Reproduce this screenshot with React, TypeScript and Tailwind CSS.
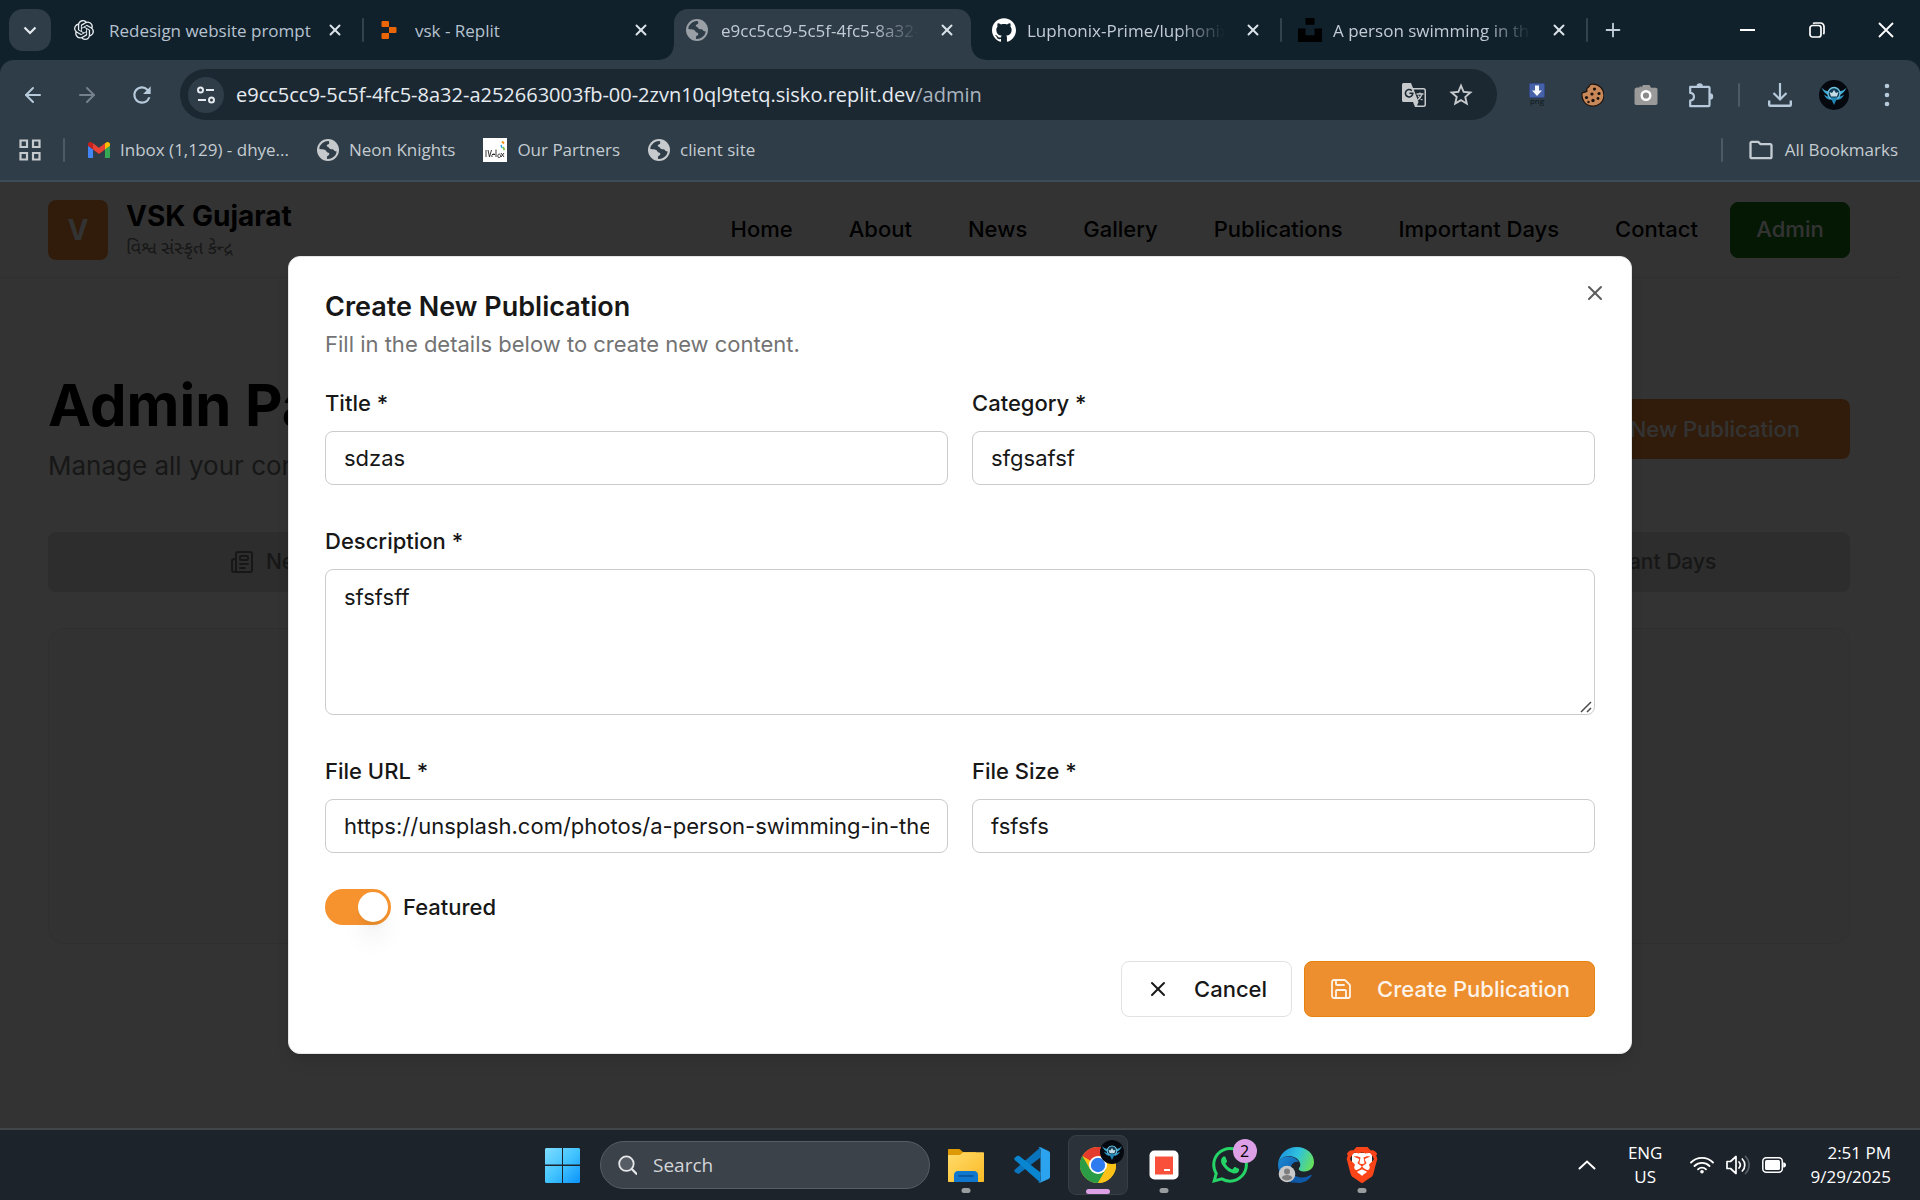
import { useState } from "react";
import type { ReactNode } from "react";
import { ArrowLeft, ArrowRight, Newspaper, Plus, Save, X, BookOpen, Calendar, Image as ImageIcon } from "lucide-react";
import { SiBrave, SiGithub, SiOpenai, SiReplit, SiWhatsapp } from "react-icons/si";
import { MdOutlineStarBorder, MdRefresh, MdOutlineFolder } from "react-icons/md";

/* ---------- small drawings ---------- */

function Globe({ className }: { className: string }) {
  return (
    <svg viewBox="0 0 24 24" className={className} aria-hidden="true">
      <circle cx="12" cy="12" r="12" fill="currentColor" />
      <path
        d="M12.8 2.3A9.8 9.8 0 0 0 2.4 10.6c2.4 1 4.600 .4 6.600 1.400 1.500.8 1.200 2.300 2.600 2.800 1.300.4 2.200.6 1.700 2-.4 1.200-1.900 1-2.300 2.200-.3.9-.2 1.700.1 2.700A9.800 9.800 0 0 0 21.600 13.600c-1.600.2-2.400-.2-3.200-1.500-.8-1.300-2.500-.8-3.900-1.300-1.500-.5-1.300-2.100-2.900-2.400-1.300-.2-1.400-2 .1-2.400 1.200-.3 1.900-.8 1.600-2.100z"
        className="fill-[#2e3d47]"
      />
    </svg>
  );
}

function UnsplashMark() {
  return (
    <svg viewBox="0 0 24 24" className="size-6" aria-hidden="true">
      <path d="M7.500 0h9v6.700h-9zM0 10.600h7.500v6.700h9v-6.700H24V24H0z" fill="#000" />
    </svg>
  );
}

function GmailMark() {
  return (
    <svg viewBox="0 0 24 18" className="w-[22px]" aria-hidden="true">
      <path d="M0 4v12.400C0 17.300.7 18 1.600 18h3.900V7.800z" fill="#4285f4" />
      <path d="M24 4v12.400c0 .9-.7 1.600-1.600 1.600h-3.900V7.800z" fill="#34a853" />
      <path d="M18.500 1.400v6.900L24 4.200V2.500c0-2.100-2.400-3.200-4-2z" fill="#fbbc04" />
      <path d="M5.500 8.300V1.400L12 6.200l6.500-4.800v6.900L12 13.200z" fill="#ea4335" />
      <path d="M0 2.500v1.700l5.500 4.100V1.400L4 .5C2.300-.8 0 .4 0 2.500z" fill="#c5221f" />
    </svg>
  );
}

function VeloxMark() {
  return (
    <svg viewBox="0 0 24 24" className="size-6" aria-hidden="true">
      <path d="M0 0h24v24H0z" fill="#fff" />
      <path d="M3 12v7M5 12l1.500 7L8.500 12M9 16.500h3M9 19c-1-3 2.500-4 3-2M13 11.500V19M15 19c-1-3 2-4 2.500-1.500S15 20 15 19M18 15l3 4M21 15l-3 4" fill="none" stroke="#222" strokeWidth=".9" />
      <path d="M19 3.500l2 2" stroke="#f29111" strokeWidth="1.800" />
      <path d="M18 7l1 3" stroke="#2fa4e7" strokeWidth="1.500" />
      <path d="M20 9l1.500 3" stroke="#7ac143" strokeWidth="1.800" />
    </svg>
  );
}

function SiteInfoIcon() {
  return (
    <svg viewBox="0 0 20 20" className="size-5" fill="none" stroke="#e3e9ee" strokeWidth="2" aria-hidden="true">
      <circle cx="4.500" cy="5" r="2.500" />
      <path d="M10 5h8M2 15h8" />
      <circle cx="15.500" cy="15" r="2.500" />
    </svg>
  );
}

function TranslateIcon() {
  return (
    <svg viewBox="0 0 26 26" className="size-[26px]" aria-hidden="true">
      <path d="M2.500 1H10l2 5h10.500A2.500 2.500 0 0 1 25 8.500v14a2.500 2.500 0 0 1-2.500 2.500H14l-2-5H2.500A1.500 1.500 0 0 1 1 18.500v-16A1.500 1.500 0 0 1 2.500 1z" fill="#c7cacd" />
      <path d="M12.700 7.500h9.800a1 1 0 0 1 1 1v14a1 1 0 0 1-1 1h-6.500l1.500-3.500z" fill="#1b2832" />
      <path d="M15.500 12h7M19 10.500V12M21 12c-.6 2.500-2.500 4.600-4.500 6M17 13.500c1 1.800 2.500 3.500 4.500 4.500" fill="none" stroke="#c7cacd" strokeWidth="1.300" />
      <path d="M10.800 8.700a3.700 3.700 0 1 0 1 2.500H8.400" fill="none" stroke="#1b2832" strokeWidth="1.600" />
    </svg>
  );
}

function PngIcon() {
  return (
    <svg viewBox="0 0 16 24" className="h-6 w-4" aria-hidden="true">
      <rect x=".5" y=".5" width="15" height="14" rx="1" fill="#4661a8" stroke="#34498a" />
      <path d="M6 2.500h4v5h3l-5 5.500-5-5.500h3z" fill="#f4f6fb" />
      <text x="8" y="21" textAnchor="middle" fontSize="8" className="fill-[#10181e] font-['Open_Sans',sans-serif]">png</text>
    </svg>
  );
}

function CookieIcon() {
  return (
    <svg viewBox="0 0 24 24" className="size-6" aria-hidden="true">
      <path d="M12.500 1.200C9 .6 10 3.500 8.300 4.200 7 4.700 6.500 6.500 7 8c-1.400 1.600-3 1.200-4.800 1.800A11 11 0 1 0 12.500 1.200z" fill="#c98859" stroke="#1c120c" strokeWidth="1.200" />
      <g fill="#1c120c">
        <circle cx="14.500" cy="6" r="1.600" />
        <circle cx="12" cy="11" r="1.600" />
        <circle cx="19" cy="10.500" r="1.600" />
        <circle cx="6.500" cy="14.500" r="1.600" />
        <circle cx="13" cy="17.500" r="1.700" />
        <circle cx="18" cy="15.500" r="1.400" />
        <circle cx="8.500" cy="19" r="1.200" />
      </g>
    </svg>
  );
}

function CameraIcon() {
  return (
    <svg viewBox="0 0 24 24" className="size-6" aria-hidden="true">
      <path d="M2.500 4.500h3l0-1h2v1L9 2h6.500l1.500 2.800h5A1.500 1.500 0 0 1 23.500 6.300v14A1.700 1.700 0 0 1 21.800 22H2.200A1.700 1.700 0 0 1 .5 20.300v-13A2.500 2.500 0 0 1 2.500 4.500z" fill="#9a9a9a" />
      <circle cx="12" cy="12.500" r="4.300" fill="#8a8a8a" stroke="#fff" strokeWidth="2.400" />
    </svg>
  );
}

function PuzzleIcon() {
  return (
    <svg viewBox="0 0 26 26" className="size-[26px]" aria-hidden="true">
      <path
        d="M2.200 4.800h18.300a1 1 0 0 1 1 1v17.400a1 1 0 0 1-1 1H2.200v-5.700c5-.4 5-7.200 0-7.600z"
        fill="none"
        stroke="currentColor"
        strokeWidth="2.200"
        strokeLinejoin="round"
      />
      <path d="M8.500 4.500a3.200 3.200 0 0 1 6.400 0zM22 11.200a3.200 3.200 0 0 1 0 6.400z" fill="currentColor" />
    </svg>
  );
}

function DownloadIcon() {
  return (
    <svg viewBox="0 0 24 24" className="size-6" fill="none" stroke="currentColor" strokeWidth="2.400" aria-hidden="true">
      <path d="M12 0v16M5.500 10l6.500 6.500 6.500-6.500" strokeWidth="2.200" />
      <path d="M1.200 17.500v4.300c0 .6.400 1 1 1h19.600c.6 0 1-.4 1-1v-4.300" />
    </svg>
  );
}

function WingedAvatar({ className }: { className: string }) {
  return (
    <svg viewBox="0 0 30 30" className={className} aria-hidden="true">
      <circle cx="15" cy="15" r="15" fill="#05090f" />
      <path d="M2.500 7.500c3 3.500 6 3.500 8.500 4.500L10 15c-3-.5-6-3.500-7.500-7.500zM27.500 7.500c-3 3.500-6 3.500-8.500 4.500l1 3c3-.5 6-3.500 7.500-7.500z" fill="#3fa9d0" />
      <path d="M5 14.500c2 1.500 4 2 5.500 2.500l1.500 3c-3-.5-6-2-7-5.500zM25 14.500c-2 1.500-4 2-5.500 2.500L18 20c3-.5 6-2 7-5.500z" fill="#2a94c4" />
      <circle cx="15" cy="13.500" r="6" fill="#123c55" stroke="#6ec3e0" strokeWidth="1.300" />
      <path d="M10.500 12l2.500 1 2-3 2 3 2.500-1-1.500 4.500h-6z" fill="#c4dce6" />
      <path d="M11.500 17.500h7L15 25z" fill="#1f86b4" />
    </svg>
  );
}

function ChromeMark() {
  return (
    <svg viewBox="0 0 36 36" className="size-9" aria-hidden="true">
      <circle cx="18" cy="18" r="18" fill="#fbc116" />
      <path d="M18 18L2.400 9A18 18 0 0 1 33.600 9z" fill="#e33b2e" />
      <path d="M2.400 9A18 18 0 0 0 18 36l7.800-13.500L18 18l-7.800 4.500z" fill="#2a9c46" />
      <path d="M18 9h15.600A18 18 0 0 1 18 36l7.800-13.500z" fill="#fbc116" />
      <circle cx="18" cy="18" r="9" fill="#fff" />
      <circle cx="18" cy="18" r="7.200" fill="#2f7cf0" />
    </svg>
  );
}

function CodeMark() {
  return (
    <svg viewBox="0 0 36 36" className="size-9" aria-hidden="true">
      <path d="M26.500 10.500L4.500 27 1 25.200c-1-.9-1-1.900 0-2.800L26 .8z" fill="#0a74bd" />
      <path d="M1 13.200c-1-.9-1-1.900 0-2.700L3 9c.7-.5 1.600-.5 2.300 0L26.500 25.500 26 35.200z" fill="#0a86d1" />
      <path d="M26 35.800c-1 0-1.600-.5-2.300-1.200 1 .9 2.800.2 2.800-1.200V2.600c0-1.400-1.800-2.100-2.800-1.200C24.500.6 25.500-.3 27 .4l7.500 3.600c1 .5 1.500 1.200 1.500 2.200v23.600c0 1-.5 1.700-1.500 2.200z" fill="#2ba3ee" />
    </svg>
  );
}

function EdgeMark() {
  return (
    <svg viewBox="0 0 36 36" className="size-9" aria-hidden="true">
      <defs>
        <linearGradient id="edge-top" x1="0" y1=".3" x2="1" y2=".6">
          <stop offset="0" stopColor="#1c8fdc" />
          <stop offset=".5" stopColor="#2fc2df" />
          <stop offset="1" stopColor="#66e05a" />
        </linearGradient>
        <linearGradient id="edge-low" x1="0" y1="0" x2="1" y2="1">
          <stop offset="0" stopColor="#1b8ad8" />
          <stop offset="1" stopColor="#0c4a93" />
        </linearGradient>
      </defs>
      <path d="M0 17C1 7 9 0 18.500 0 29 0 36 7 36 15c0 6-4.500 9.500-9.500 9.500-4 0-6.500-1.500-5.500-3.500 1.500-2 1.500-3 1-5C20.500 11 15 9 11 9 6 9 1.500 12 0 17z" fill="url(#edge-top)" />
      <path d="M0 17c1.500-5 5.500-7.500 10.500-7.500 4 0 8.500 2 10.500 5.500-5-1-8 2-8 6.500 0 6.500 5 11.500 11 13.500C10 38.500 0 30 0 17z" fill="url(#edge-low)" />
      <path d="M13.500 19c-2 6 3 11.500 10.500 11.500 3.500 0 6-1.500 9-2.500.7-.2.900.4.500 1C30 34 25 36 20.500 36 13 34 10.500 25 13.500 19z" fill="#0f5aa8" />
      <circle cx="9" cy="27" r="8.300" fill="#c9c9c9" />
      <circle cx="9" cy="24.500" r="3" fill="#7e7e7e" />
      <path d="M3.800 31c0-4 10.400-4 10.400 0-2.500 3.200-7.900 3.200-10.400 0z" fill="#7e7e7e" />
    </svg>
  );
}

function FolderMark() {
  return (
    <svg viewBox="0 0 36 33" className="w-9" aria-hidden="true">
      <defs>
        <linearGradient id="folder-front" x1="0" y1="0" x2="1" y2="1">
          <stop offset="0" stopColor="#ffdc6b" />
          <stop offset="1" stopColor="#fbb924" />
        </linearGradient>
      </defs>
      <path d="M1 0h9.500c1 0 1.500.3 2.200 1L15 3H28v6H0V1c0-.6.4-1 1-1z" fill="#dd9a06" />
      <path d="M0 6h11c1 0 1.500-.3 2.200-1l1-1c.6-.6 1-.8 2-.8H35c.6 0 1 .4 1 1V32c0 .6-.4 1-1 1H1c-.6 0-1-.4-1-1z" fill="url(#folder-front)" />
      <path d="M6 33v-7c0-2.200 1.500-4 4-4h16c2.500 0 4 1.800 4 4v7z" fill="#0f78ce" />
      <path d="M11 27h14" stroke="#0b4f94" strokeWidth="1.600" strokeLinecap="round" />
    </svg>
  );
}

function WindowsMark() {
  return (
    <svg viewBox="0 0 35 35" className="size-[35px]" aria-hidden="true">
      <defs>
        <linearGradient id="win-pane" gradientUnits="userSpaceOnUse" x1="0" y1="0" x2="35" y2="35">
          <stop offset="0" stopColor="#7fdcff" />
          <stop offset=".5" stopColor="#43c4ff" />
          <stop offset="1" stopColor="#0a93fb" />
        </linearGradient>
      </defs>
      <path d="M1 0h16v16.500H0V1zM18 0h16l1 1v15.500H18zM0 18h17v17H1l-1-1zM18 18h17v16l-1 1H18z" fill="url(#win-pane)" />
    </svg>
  );
}

function RedAppMark() {
  return (
    <svg viewBox="0 0 30 30" className="size-[30px]" aria-hidden="true">
      <rect x=".5" y=".5" width="29" height="29" rx="5" fill="#fff" />
      <rect x="6" y="6.500" width="18" height="18" fill="#f9503c" />
      <path d="M15 20h6" stroke="#fff" strokeWidth="2" />
    </svg>
  );
}

function WifiIcon() {
  return (
    <svg viewBox="0 0 24 18" className="w-6" fill="none" stroke="#fff" strokeWidth="1.800" strokeLinecap="round" aria-hidden="true">
      <path d="M1 6.500a15.500 15.500 0 0 1 22 0M4.500 10a10.700 10.700 0 0 1 15 0M8 13.300a5.700 5.700 0 0 1 8 0" />
      <circle cx="12" cy="15.700" r="1.800" fill="#fff" stroke="none" />
    </svg>
  );
}

function VolumeIcon() {
  return (
    <svg viewBox="0 0 24 20" className="w-6" fill="none" stroke="#fff" strokeWidth="1.700" strokeLinecap="round" strokeLinejoin="round" aria-hidden="true">
      <path d="M1 6.500h3.500L10 1.500v17l-5.500-5H1z" />
      <path d="M13 7a4.500 4.500 0 0 1 0 6M16.300 4a8.500 8.500 0 0 1 0 12" />
      <path d="M19.500 1.500a12 12 0 0 1 0 17" stroke="#5a6067" />
    </svg>
  );
}

function BatteryIcon() {
  return (
    <svg viewBox="0 0 24 16" className="w-6" aria-hidden="true">
      <rect x=".8" y=".8" width="19.500" height="14.400" rx="3.500" fill="none" stroke="#fff" strokeWidth="1.500" />
      <rect x="3" y="3" width="15" height="10" rx="1.500" fill="#fff" />
      <path d="M21.200 5.500h.8c1 0 2 1 2 2.500s-1 2.500-2 2.500h-.8z" fill="#fff" />
    </svg>
  );
}

/* ---------- browser chrome ---------- */

type Tab = { title: string; icon: ReactNode; active?: boolean; fade?: boolean; divider?: boolean };

const tabs: Tab[] = [
  { title: "Redesign website prompt", icon: <SiOpenai className="size-5 text-[#e8eef2]" />, divider: true },
  { title: "vsk - Replit", icon: <SiReplit className="size-[18px] text-[#ec6608]" /> },
  { title: "e9cc5cc9-5c5f-4fc5-8a32-a252663003fb", icon: <Globe className="size-[22px] text-[#9aa0a6]" />, active: true, fade: true },
  { title: "Luphonix-Prime/luphonix-website", icon: <SiGithub className="size-6 text-white" />, fade: true, divider: true },
  { title: "A person swimming in the ocean", icon: <UnsplashMark />, fade: true, divider: true },
];

function TabStrip() {
  return (
    <div className="flex h-[60px] items-start bg-[#11212b] pt-[9px] pl-[9px]">
      <button aria-label="Search tabs" className="flex h-[42px] w-[42px] shrink-0 items-center justify-center rounded-[14px] bg-[#2e3d47]">
        <svg viewBox="0 0 14 14" className="size-[14px]" fill="none" stroke="#e3e9ee" strokeWidth="2.200" aria-hidden="true">
          <path d="M1.500 4.500L7 10l5.500-5.500" />
        </svg>
      </button>
      <div role="tablist" className="ml-[11px] flex min-w-0 max-w-[1530px] flex-1">
        {tabs.map((tab) => (
          <div key={tab.title} className="flex h-[51px] min-w-0 flex-1 pr-px">
            <div
              role="tab"
              aria-selected={!!tab.active}
              className={
                tab.active
                  ? "relative flex min-w-0 flex-1 rounded-t-[14px] bg-[#2e3d47] pl-3"
                  : "flex min-w-0 flex-1 pl-3"
              }
            >
              {tab.active && (
                <>
                  <span className="absolute bottom-0 -left-[14px] size-[14px] bg-[radial-gradient(circle_at_0_0,transparent_13px,#2e3d47_14px)]" />
                  <span className="absolute -right-[14px] bottom-0 size-[14px] bg-[radial-gradient(circle_at_100%_0,transparent_13px,#2e3d47_14px)]" />
                </>
              )}
              <span className="flex h-[42px] w-6 shrink-0 items-center">{tab.icon}</span>
              <span
                className={
                  tab.fade
                    ? "ml-[11px] h-[42px] min-w-0 flex-1 overflow-hidden text-[17px] leading-[44px] whitespace-nowrap text-[#c3ccd6] [mask-image:linear-gradient(to_right,#000_74%,transparent_97%)]"
                    : "ml-[11px] h-[42px] min-w-0 flex-1 overflow-hidden text-[17px] leading-[44px] whitespace-nowrap text-[#b6c2d0]"
                }
              >
                {tab.title}
              </span>
              <button aria-label={"Close " + tab.title} className="mr-[6px] ml-1 flex h-[42px] w-9 shrink-0 items-center justify-center text-[#dbe3ea]">
                <X className="size-[18px]" strokeWidth={2.600} />
              </button>
            </div>
            <span className="flex h-[42px] w-2 shrink-0 items-center justify-center">
              {tab.divider && <span className="h-6 w-0.5 rounded-full bg-[#33434e]" />}
            </span>
          </div>
        ))}
      </div>
      <button aria-label="New tab" className="flex h-[42px] w-[42px] shrink-0 items-center justify-center text-[#c3d0dc]">
        <Plus className="size-[22px]" strokeWidth={2} />
      </button>
      <div className="ml-auto flex h-[42px] shrink-0 text-white">
        <button aria-label="Minimize" className="flex w-[69px] items-center justify-center">
          <span className="h-0.5 w-[15px] bg-white" />
        </button>
        <button aria-label="Restore" className="flex w-[69px] items-center justify-center">
          <svg viewBox="0 0 16 16" className="size-4" fill="none" stroke="currentColor" strokeWidth="1.700" aria-hidden="true">
            <rect x="1" y="3.500" width="11" height="11.500" rx="2.500" />
            <path d="M4 1.500C4.600 1 5.300 1 6 1h5.500A3.500 3.500 0 0 1 15 4.500v6c0 .7-.2 1.300-.6 1.800" />
          </svg>
        </button>
        <button aria-label="Close window" className="flex w-[69px] items-center justify-center">
          <svg viewBox="0 0 16 16" className="size-4" fill="none" stroke="currentColor" strokeWidth="1.800" aria-hidden="true">
            <path d="M1 1l14 14M15 1L1 15" />
          </svg>
        </button>
      </div>
    </div>
  );
}

function AddressBar() {
  return (
    <div className="flex h-[60px] items-center rounded-t-[14px] bg-[#2e3d47] pr-[25px] pt-[9px]">
      <div className="flex w-[180px] shrink-0 items-center pl-[21px] text-[#b7cadb]">
        <button aria-label="Back" className="flex w-[54px]"><ArrowLeft className="size-6" strokeWidth={2} /></button>
        <button aria-label="Forward" className="flex w-[54px] text-[#75828c]"><ArrowRight className="size-6" strokeWidth={2} /></button>
        <button aria-label="Reload" className="flex"><MdRefresh className="size-[26px]" /></button>
      </div>
      <div className="flex h-[51px] min-w-0 flex-1 items-center rounded-full bg-[#1b2832] pr-[22px] pl-2">
        <button aria-label="View site information" className="flex size-9 shrink-0 items-center justify-center rounded-full bg-[#2e3d47]">
          <SiteInfoIcon />
        </button>
        <div className="ml-3 min-w-0 flex-1 truncate text-[20px] text-[#e6ebf0]">
          e9cc5cc9-5c5f-4fc5-8a32-a252663003fb-00-2zvn10ql9tetq.sisko.replit.dev<span className="text-[#aab4bd]">/admin</span>
        </div>
        <button aria-label="Translate this page"><TranslateIcon /></button>
        <button aria-label="Bookmark this tab" className="ml-5 text-[#c7cacd]"><MdOutlineStarBorder className="size-7" /></button>
      </div>
      <div className="ml-8 flex shrink-0 items-center text-[#b7cadb]">
        <button aria-label="PNG export" className="flex w-[51px]"><PngIcon /></button>
        <button aria-label="Cookies" className="flex w-[54px]"><CookieIcon /></button>
        <button aria-label="Screenshot" className="flex w-[54px]"><CameraIcon /></button>
        <button aria-label="Extensions" className="flex w-[50px]"><PuzzleIcon /></button>
        <span className="h-6 w-0.5 rounded-full bg-[#4a5b67]" />
        <button aria-label="Downloads" className="ml-7 flex w-[51px]"><DownloadIcon /></button>
        <button aria-label="Profile"><WingedAvatar className="size-[30px]" /></button>
        <button aria-label="More" className="ml-[30px] flex w-4 justify-center">
          <svg viewBox="0 0 6 26" className="h-[26px]" fill="currentColor" aria-hidden="true">
            <circle cx="3" cy="4" r="2.300" /><circle cx="3" cy="13" r="2.300" /><circle cx="3" cy="22" r="2.300" />
          </svg>
        </button>
      </div>
    </div>
  );
}

const bookmarks = [
  { label: "Inbox (1,129) - dhye...", icon: <GmailMark /> },
  { label: "Neon Knights", icon: <Globe className="size-[22px] text-[#c7cacd]" /> },
  { label: "Our Partners", icon: <VeloxMark /> },
  { label: "client site", icon: <Globe className="size-[22px] text-[#c7cacd]" /> },
];

function BookmarksBar() {
  return (
    <div className="flex h-[62px] items-center border-b-2 border-[#3d4c56] bg-[#2e3d47] pr-[22px] pl-[19px] text-[17px] text-[#c4cbd1]">
      <button aria-label="Apps" className="flex">
        <svg viewBox="0 0 22 22" className="size-[22px]" fill="none" stroke="#c7cacd" strokeWidth="2.200" aria-hidden="true">
          <path d="M1.500 1.500h6.500v6.500H1.500zM14 1.500h6.500v6.500H14zM1.500 14h6.500v6.500H1.500zM14 14h6.500v6.500H14z" />
        </svg>
      </button>
      <span className="ml-[22px] h-6 w-0.5 rounded-full bg-[#4a5b67]" />
      <nav aria-label="Bookmarks" className="ml-[23px] flex items-center gap-7">
        {bookmarks.map((b) => (
          <a key={b.label} href="#" className="flex items-center gap-[10px] whitespace-nowrap">
            {b.icon}
            {b.label}
          </a>
        ))}
      </nav>
      <span className="ml-auto h-6 w-0.5 rounded-full bg-[#4a5b67]" />
      <button className="ml-6 flex items-center gap-[10px]">
        <MdOutlineFolder className="size-7" />
        All Bookmarks
      </button>
    </div>
  );
}

/* ---------- page under the dialog ---------- */

const links = ["Home", "About", "News", "Gallery", "Publications", "Important Days", "Contact"];

function SitePage() {
  return (
    <div className="absolute inset-0 overflow-hidden bg-white text-black" aria-hidden="true">
      <div className="mr-5">
        <header className="flex h-24 items-center justify-between border-b border-[#ebebeb] pr-[50px] pl-12">
          <div className="flex items-center">
            <div className="flex size-[60px] items-center justify-center rounded-lg bg-[#f28c37] text-[28px] font-bold text-white">V</div>
            <div className="ml-[18px]">
              <div className="pt-1 text-[28px] leading-8 font-bold">VSK Gujarat</div>
              <div className="pt-1 font-['Noto_Sans_Gujarati','Noto_Sans',sans-serif] text-[18px] leading-7 text-[#737373]">વિશ્વ સંસ્કૃત કેન્દ્ર</div>
            </div>
          </div>
          <nav className="flex items-center text-[22px] font-medium">
            <div className="flex gap-14">
              {links.map((l) => (
                <a key={l} href="#">{l}</a>
              ))}
            </div>
            <button className="ml-8 h-14 w-[120px] rounded-lg border border-[#147814] bg-[#147814] text-white">Admin</button>
          </nav>
        </header>
        <main className="pt-[92px] pr-[50px] pl-12">
          <div className="flex items-center justify-between">
            <div>
              <h1 className="text-[58px] leading-[70px] font-bold">Admin Panel</h1>
              <p className="mt-2 text-[26px] leading-9 text-[#737373]">Manage all your content from here</p>
            </div>
            <button className="mt-1 flex h-[60px] items-center gap-4 rounded-lg bg-[#f28c37] px-[50px] text-[22px] font-medium text-white">
              <Plus className="size-5" />
              Add New Publication
            </button>
          </div>
          <div className="mt-12 grid h-[60px] grid-cols-4 rounded-lg bg-[#dedede] px-1 text-[21px] font-medium text-[#737373]">
            <button className="flex items-center justify-center gap-3"><Newspaper className="size-6" />News</button>
            <button className="flex items-center justify-center gap-3"><ImageIcon className="size-6" />Gallery</button>
            <button className="flex items-center justify-center gap-3"><BookOpen className="size-6" />Publications</button>
            <button className="flex items-center justify-center gap-3"><Calendar className="size-6" />Important Days</button>
          </div>
          <div className="mt-9 h-[316px] rounded-2xl border border-[#ebebeb] bg-[#fafafa]" />
        </main>
      </div>
    </div>
  );
}

/* ---------- dialog ---------- */

function Field({ id, label, value }: { id: string; label: string; value: string }) {
  const [text, setText] = useState(value);
  return (
    <div className="flex min-w-0 flex-col gap-3">
      <label htmlFor={id} className="text-[22px] leading-8 font-medium">{label}</label>
      <input
        id={id}
        value={text}
        onChange={(e) => setText(e.target.value)}
        className="h-[54px] w-full rounded-lg border border-[#cbcbcb] px-[18px] text-[22px] outline-none"
      />
    </div>
  );
}

function PublicationDialog() {
  const [featured, setFeatured] = useState(true);
  return (
    <div className="absolute inset-0 flex items-center justify-center bg-black/80">
      <div
        role="dialog"
        aria-modal="true"
        aria-labelledby="dialog-title"
        className="relative w-[70%] rounded-xl border border-[#e5e5e5] bg-white p-9 text-[#171717] shadow-lg"
      >
        <button aria-label="Close" className="absolute top-6 right-6 flex size-6 items-center justify-center text-[#5c5c5c]">
          <X className="size-6" strokeWidth={2} />
        </button>
        <h2 id="dialog-title" className="mt-[-2px] text-[27px] leading-8 font-semibold">Create New Publication</h2>
        <p className="mt-[5px] text-[22px] leading-8 text-[#737373]">Fill in the details below to create new content.</p>
        <form className="mt-[27px]" onSubmit={(e) => e.preventDefault()}>
          <div className="grid grid-cols-2 gap-6">
            <Field id="title" label="Title *" value="sdzas" />
            <Field id="category" label="Category *" value="sfgsafsf" />
          </div>
          <div className="mt-10 flex flex-col gap-3">
            <label htmlFor="description" className="text-[22px] leading-8 font-medium">Description *</label>
            <div className="relative">
              <textarea
                id="description"
                defaultValue="sfsfsff"
                className="block h-[146px] w-full rounded-lg border border-[#cbcbcb] px-[18px] py-3 text-[22px] leading-[30px] outline-none [&::-webkit-resizer]:bg-transparent"
              />
              <svg viewBox="0 0 12 12" className="pointer-events-none absolute right-[3px] bottom-[2px] size-3" stroke="#4a4a4a" strokeWidth="1.500" aria-hidden="true">
                <path d="M1 11L11 1M7 11l4-4" />
              </svg>
            </div>
          </div>
          <div className="mt-10 grid grid-cols-2 gap-6">
            <Field id="file-url" label="File URL *" value="https://unsplash.com/photos/a-person-swimming-in-the-ocean" />
            <Field id="file-size" label="File Size *" value="fsfsfs" />
          </div>
          <div className="mt-9 flex items-center gap-3">
            <input
              id="featured"
              type="checkbox"
              role="switch"
              checked={featured}
              onChange={(e) => setFeatured(e.target.checked)}
              className="h-9 w-[66px] shrink-0 appearance-none rounded-full bg-[#d4d4d4] p-[3px] before:block before:size-[30px] before:rounded-full before:bg-white before:shadow-xl checked:bg-[#f6932f] checked:before:ml-[30px]"
            />
            <label htmlFor="featured" className="text-[22px] leading-8 font-medium">Featured</label>
          </div>
          <div className="mt-9 flex justify-end gap-3 text-[22px] font-medium">
            <button type="button" className="flex h-14 items-center rounded-lg border border-[#e2e2e2] px-6">
              <X className="mr-6 size-6" strokeWidth={2} />
              Cancel
            </button>
            <button type="submit" className="flex h-14 items-center rounded-lg border border-[#e6820f] bg-[#ed8f2e] px-6 text-[#fdf3e8]">
              <Save className="mr-6 size-6" strokeWidth={1.800} />
              Create Publication
            </button>
          </div>
        </form>
      </div>
    </div>
  );
}

/* ---------- taskbar ---------- */

function Taskbar() {
  return (
    <footer className="flex h-[72px] items-center border-t-2 border-[#41464a] bg-[#1c232b] font-['Open_Sans','Noto_Sans',sans-serif] text-white">
      <div className="flex-1" />
      <div className="ml-12 flex h-full shrink-0 items-center">
        <button aria-label="Start" className="mr-5"><WindowsMark /></button>
        <label className="mr-[3px] flex h-12 w-[330px] items-center rounded-full border border-[#575d64] bg-[#3b424a] pl-[17px]">
          <svg viewBox="0 0 22 22" className="size-[22px]" fill="none" stroke="#e6e8ea" strokeWidth="2" strokeLinecap="round" aria-hidden="true">
            <circle cx="9.500" cy="9.500" r="8.200" fill="#565d64" />
            <path d="M15.800 15.800l5 5" strokeWidth="2.600" />
          </svg>
          <input placeholder="Search" aria-label="Search" className="ml-4 w-full bg-transparent text-[19px] outline-none placeholder:text-[#d3d6d9]" />
        </label>
        <AppButton label="File Explorer" marker="dot"><FolderMark /></AppButton>
        <AppButton label="Code editor"><CodeMark /></AppButton>
        <AppButton label="Chrome" marker="active">
          <ChromeMark />
          <WingedAvatar className="absolute top-[4px] right-[3px] size-6" />
        </AppButton>
        <AppButton label="Recorder" marker="dot"><RedAppMark /></AppButton>
        <AppButton label="WhatsApp">
          <SiWhatsapp className="size-9 text-[#25d366]" />
          <span className="absolute top-[4px] right-[3px] flex size-6 items-center justify-center rounded-full bg-[#dda0e6] text-[16px] text-black">2</span>
        </AppButton>
        <AppButton label="Edge"><EdgeMark /></AppButton>
        <AppButton label="Brave" marker="dot">
          <span className="relative flex h-9 items-center">
            <span className="absolute inset-x-2 top-[6px] bottom-[6px] rounded-b-full bg-white" />
            <SiBrave className="relative size-9 text-[#fb4418]" />
          </span>
        </AppButton>
      </div>
      <div className="flex h-full flex-1 items-center justify-end pr-[29px] text-[17px] leading-6">
        <button aria-label="Show hidden icons" className="mr-8">
          <svg viewBox="0 0 18 10" className="w-[18px]" fill="none" stroke="#fff" strokeWidth="2" strokeLinecap="round" aria-hidden="true">
            <path d="M1.500 8.500L9 1.500l7.500 7" />
          </svg>
        </button>
        <button className="text-center">ENG<br />US</button>
        <button aria-label="Network, volume and battery" className="ml-7 flex items-center gap-3">
          <WifiIcon />
          <VolumeIcon />
          <BatteryIcon />
        </button>
        <button className="ml-6 text-right">2:51 PM<br />9/29/2025</button>
      </div>
    </footer>
  );
}

function AppButton({ label, marker, children }: { label: string; marker?: "dot" | "active"; children: ReactNode }) {
  return (
    <button
      aria-label={label}
      className={
        marker === "active"
          ? "relative mx-[3px] flex size-[60px] items-center justify-center rounded-lg border border-[#373e46] bg-[#2b323a]"
          : "relative mx-[3px] flex size-[60px] items-center justify-center"
      }
    >
      {children}
      {marker === "dot" && <span className="absolute bottom-[2px] left-1/2 h-[5px] w-[9px] -translate-x-1/2 rounded-full bg-[#9a9da0]" />}
      {marker === "active" && <span className="absolute bottom-0 left-1/2 h-[5px] w-6 -translate-x-1/2 rounded-full bg-[#dda0e6]" />}
    </button>
  );
}

export default function App() {
  return (
    <div className="flex min-h-screen flex-col bg-[#11212b] font-['Inter',sans-serif]">
      <div className="font-['Open_Sans','Noto_Sans',sans-serif]">
        <TabStrip />
        <AddressBar />
        <BookmarksBar />
      </div>
      <div className="relative min-h-[946px] flex-1">
        <SitePage />
        <PublicationDialog />
      </div>
      <Taskbar />
    </div>
  );
}
